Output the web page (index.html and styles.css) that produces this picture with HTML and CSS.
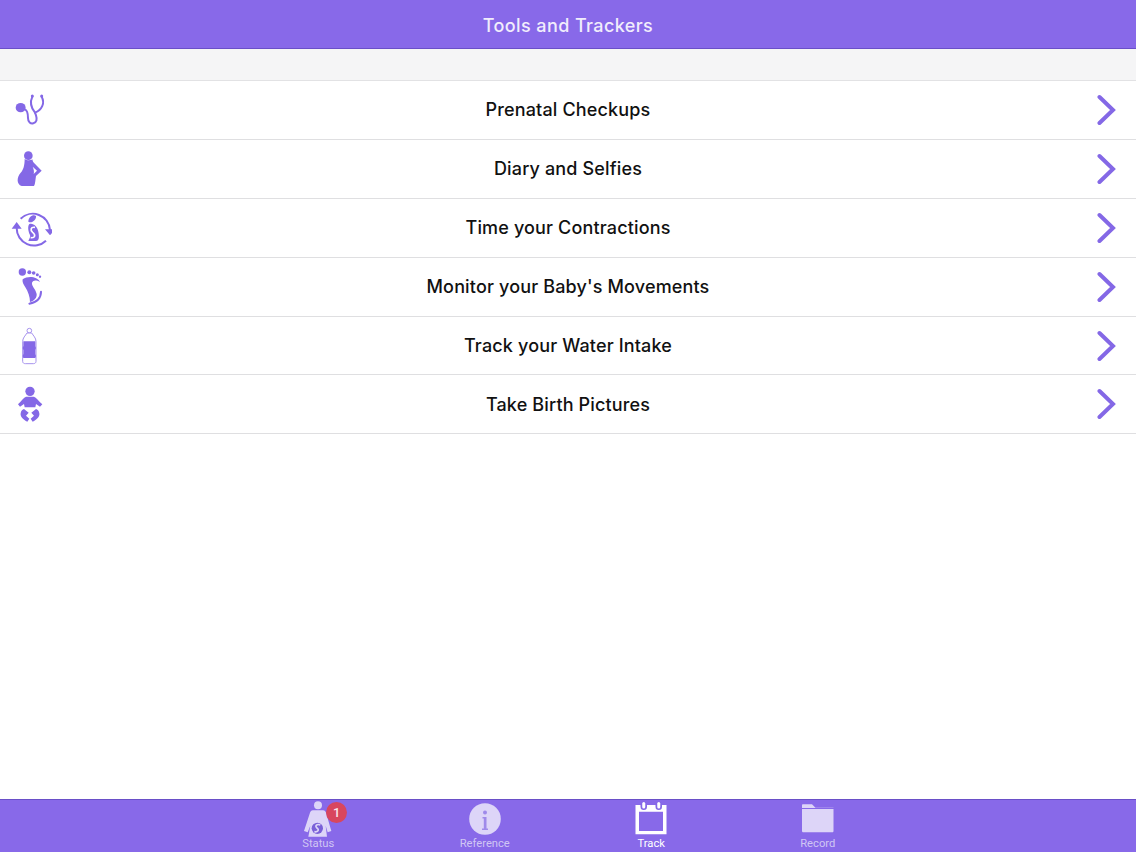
FILE: index.html
```html
<!DOCTYPE html>
<html lang="en">
<head>
<meta charset="utf-8">
<title>Tools and Trackers</title>
<link rel="stylesheet" href="styles.css">
</head>
<body>
<div class="app">
  <header class="header">Tools and Trackers</header>
  <div class="band"></div>
  <ul class="list">
    <li class="row">
      <span class="row-icon"><svg width="44" height="44" viewBox="24 24 132 132"><ellipse cx="62" cy="83" rx="15" ry="14" fill="#8468e6"/><g fill="none" stroke="#8468e6" stroke-width="6" stroke-linecap="round"><path d="M74 88C80 90 84 100 84 114C84 127 92 132 100 130C110 128 112 118 108 106L105 98"/><path d="M97 50C90 65 92 82 105 98C125 90 136 70 125 50"/></g><circle cx="97" cy="48" r="4.500" fill="#8468e6"/><circle cx="125" cy="48" r="4.500" fill="#8468e6"/></svg></span>
      <span class="row-label">Prenatal Checkups</span>
      <svg class="chevron" width="22" height="34" viewBox="0 0 22 34"><path d="M2.500 4L16 17L2.500 30" fill="none" stroke="#8468e6" stroke-width="4" stroke-linecap="round"/></svg>
    </li>
    <li class="row">
      <span class="row-icon"><svg width="44" height="44" viewBox="24 201 132 132"><circle cx="85" cy="227" r="13" fill="#8468e6"/><path fill="#8468e6" d="M74 236C80 242 92 242 97 238C98 244 100 248 103 250L125 272L108 288C106 300 106 312 102 318L65 318C49 312 50 292 62 278C70 270 74 255 74 236z"/><path fill="#fff" d="M98 260L111 272L101 282C103 274 101 267 98 260z"/></svg></span>
      <span class="row-label">Diary and Selfies</span>
      <svg class="chevron" width="22" height="34" viewBox="0 0 22 34"><path d="M2.500 4L16 17L2.500 30" fill="none" stroke="#8468e6" stroke-width="4" stroke-linecap="round"/></svg>
    </li>
    <li class="row">
      <span class="row-icon"><svg width="44" height="44" viewBox="24 18 132 132"><g fill="none" stroke="#8468e6" stroke-width="6"><path d="M62 56A52 52 0 0 1 150 90"/><path d="M138 122A52 52 0 0 1 50 84"/></g><path fill="#8468e6" d="M135 88H165L150 106zM35 86H65L50 66z"/><path fill="#8468e6" d="M85 65C85 50 100 42 108 48C110 58 95 72 85 65z"/><path fill="#8468e6" d="M88 72C100 68 112 80 115 95C118 110 118 122 108 123L85 123C88 115 92 112 90 105C85 95 82 80 88 72z"/><path fill="none" stroke="#fff" stroke-width="5" d="M105 82C92 80 90 90 98 97C108 105 105 115 92 113"/></svg></span>
      <span class="row-label">Time your Contractions</span>
      <svg class="chevron" width="22" height="34" viewBox="0 0 22 34"><path d="M2.500 4L16 17L2.500 30" fill="none" stroke="#8468e6" stroke-width="4" stroke-linecap="round"/></svg>
    </li>
    <li class="row">
      <span class="row-icon"><svg width="44" height="44" viewBox="24 195 132 132"><g fill="#8468e6"><circle cx="67" cy="216" r="11"/><circle cx="88" cy="217" r="6"/><circle cx="101" cy="219" r="5.500"/><circle cx="112" cy="224" r="4.500"/><circle cx="120" cy="230" r="3.500"/><path d="M68 238C85 226 112 230 120 246C108 240 100 240 96 248C94 258 108 268 110 282C111 292 104 302 90 306C90 290 84 275 76 262C70 252 66 245 68 238z"/></g><path fill="none" stroke="#8468e6" stroke-width="6" stroke-linecap="round" d="M123 275C123 292 112 306 88 311"/></svg></span>
      <span class="row-label">Monitor your Baby's Movements</span>
      <svg class="chevron" width="22" height="34" viewBox="0 0 22 34"><path d="M2.500 4L16 17L2.500 30" fill="none" stroke="#8468e6" stroke-width="4" stroke-linecap="round"/></svg>
    </li>
    <li class="row">
      <span class="row-icon"><svg width="44" height="44" viewBox="24 10 132 132"><circle cx="88" cy="30" r="7" fill="#fff" stroke="#a793ee" stroke-width="3"/><path fill="#fff" stroke="#a793ee" stroke-width="3" d="M81 37H95C100 45 108 52 108 62V122C108 127 104 129 100 129H76C72 129 68 127 68 122V62C68 52 76 45 81 37z"/><path fill="#8468e6" d="M70 62H106V76L108 82L106 88V100L108 106L106 112H70L68 106L70 100V88L68 82L70 76z"/></svg></span>
      <span class="row-label">Track your Water Intake</span>
      <svg class="chevron" width="22" height="34" viewBox="0 0 22 34"><path d="M2.500 4L16 17L2.500 30" fill="none" stroke="#8468e6" stroke-width="4" stroke-linecap="round"/></svg>
    </li>
    <li class="row">
      <span class="row-icon"><svg width="44" height="44" viewBox="24 186 132 132"><g fill="#8468e6"><circle cx="90" cy="214" r="14"/><path d="M78 230H102C108 232 118 245 127 253L120 260L108 252L106 262H74L72 252L60 260L54 253C62 245 72 232 78 230z"/><path d="M72 267L86 278L78 287L88 296L82 305C70 300 60 290 62 280C63 272 68 268 72 267z"/><path d="M108 267L94 278L102 287L92 296L98 305C110 300 120 290 118 280C117 272 112 268 108 267z"/></g></svg></span>
      <span class="row-label">Take Birth Pictures</span>
      <svg class="chevron" width="22" height="34" viewBox="0 0 22 34"><path d="M2.500 4L16 17L2.500 30" fill="none" stroke="#8468e6" stroke-width="4" stroke-linecap="round"/></svg>
    </li>
  </ul>
  <nav class="tabbar">
    <a class="tab">
      <span class="tab-icon">
        <svg width="34" height="34" viewBox="34 21 102 102"><circle cx="85" cy="31" r="12" fill="#ddd5f8"/><path fill="#ddd5f8" d="M70 46H100C106 46 108 50 110 56L125 108L114 112L108 92L112 125H56L62 92L54 112L43 108L60 56C62 50 64 46 70 46z"/><circle cx="83" cy="100" r="17" fill="#7a60d8"/><path fill="none" stroke="#ddd5f8" stroke-width="5" d="M92 90C82 86 74 92 82 99C90 105 84 112 74 110"/></svg>
        <span class="badge">1</span>
      </span>
      <span class="tab-label">Status</span>
    </a>
    <a class="tab">
      <span class="tab-icon">
        <svg width="34" height="34" viewBox="0 0 34 34"><circle cx="17" cy="17" r="15.800" fill="#ddd5f8"/><circle cx="17" cy="10.500" r="2" fill="#9f8aea"/><path fill="#9f8aea" d="M14.500 15H18.500V26.500H20V28H14V26.500H15.800V16.500H14.500z"/></svg>
      </span>
      <span class="tab-label">Reference</span>
    </a>
    <a class="tab tab-active">
      <span class="tab-icon">
        <svg width="34" height="34" viewBox="0 0 34 34"><path fill="#fff" fill-rule="evenodd" d="M1.500 3H32.500V32.300H1.500zM5 9.700V29H29V9.700z"/><g fill="#8468e6"><rect x="6.500" y="0" width="6.500" height="8" rx="3.250"/><rect x="21.500" y="0" width="6.500" height="8" rx="3.250"/></g><g fill="#fff"><rect x="8.250" y="0" width="3" height="6.500" rx="1.500"/><rect x="23.250" y="0" width="3" height="6.500" rx="1.500"/></g></svg>
      </span>
      <span class="tab-label">Track</span>
    </a>
    <a class="tab">
      <span class="tab-icon">
        <svg width="34" height="34" viewBox="0 0 34 34"><path fill="#ddd5f8" d="M1 3.300C1 2.700 1.500 2.300 2 2.300H11L14.500 5.700H32.500V6H1z"/><path fill="#ddd5f8" d="M1 7H32.500V29C32.500 29.800 32 30.300 31 30.300H2.500C1.500 30.300 1 29.800 1 29z"/></svg>
      </span>
      <span class="tab-label">Record</span>
    </a>
  </nav>
</div>
</body>
</html>
```

FILE: styles.css
```css
* { box-sizing: border-box; }
html, body { margin: 0; padding: 0; height: 100%; }
body { background: #fff; font-family: Inter, "Liberation Sans", sans-serif; overflow: hidden; }
.app { display: flex; flex-direction: column; height: 852px; width: 1136px; }
.header {
  height: 49px;
  padding-top: 2px;
  background: #8869e9;
  border-bottom: 1px solid #6a4fc8;
  color: #f1edfc;
  font-size: 18px;
  font-weight: 500;
  display: flex;
  align-items: center;
  justify-content: center;
  letter-spacing: .4px;
}
.band { height: 32px; background: #f5f5f6; border-bottom: 1px solid #e2e2e4; }
.list { list-style: none; margin: 0; padding: 0; flex: 1; }
.row {
  height: 58.900px;
  border-bottom: 1px solid #dfdfe1;
  display: grid;
  grid-template-columns: 1fr auto 1fr;
  align-items: center;
  padding: 0 8px;
}
.row-icon { width: 44px; height: 44px; display: block; }
.row-icon svg { display: block; }
.row-label {
  font-size: 18px;
  font-weight: 500;
  color: #111;
  letter-spacing: .15px;
}
.chevron { justify-self: end; display: block; margin-right: 9px; }
.tabbar {
  height: 53px;
  background: #8869e9;
  border-top: 1px solid #6a4fc8;
  display: flex;
  justify-content: center;
}
.tab {
  width: 166.500px;
  display: flex;
  flex-direction: column;
  align-items: center;
  color: #d0c6f4;
}
.tab-active { color: #fff; }
.tab-icon { position: relative; width: 34px; height: 34px; margin-top: 2px; display: block; }
.tab-icon svg { display: block; overflow: visible; }
.tab-label { font-family: Roboto, sans-serif; font-size: 11.200px; line-height: 14px; margin-top: 1px; }
.badge {
  position: absolute;
  top: 0;
  left: 25px;
  width: 21px;
  height: 21px;
  border-radius: 50%;
  background: #d8465e;
  color: #f8e4ea;
  font-family: Roboto, sans-serif;
  font-size: 13px;
  font-weight: 500;
  display: flex;
  align-items: center;
  justify-content: center;
}
```
